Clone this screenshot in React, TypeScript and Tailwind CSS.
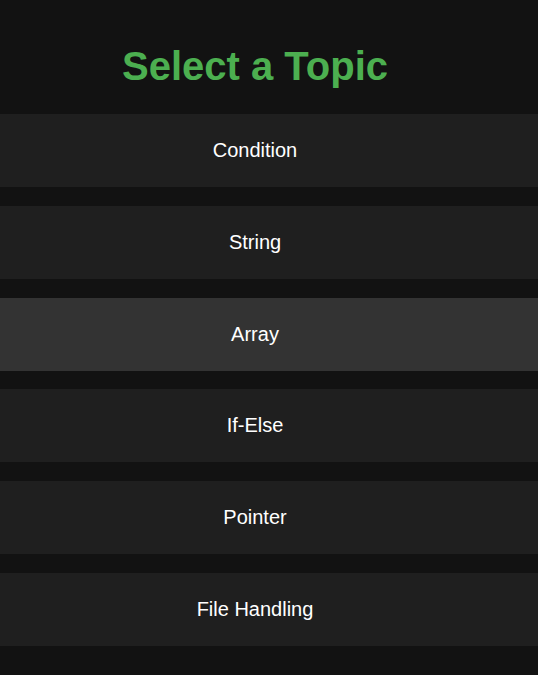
import React from "react";

const topics = ["Condition", "String", "Array", "If-Else", "Pointer", "File Handling"];

export default function App() {
  return (
    <div
      className="min-h-[675px] w-full bg-[#121212] overflow-hidden"
      style={{ fontFamily: '"Liberation Sans", Arial, sans-serif' }}
    >
      <h1 className="pt-[43px] mb-[25px] pr-[28px] text-center text-[40px] leading-[46px] font-bold text-[#4caf50]">
        Select a Topic
      </h1>
      <div className="flex flex-col gap-[18.8px]">
        {topics.map((t) => (
          <div
            key={t}
            className={
              "h-[73px] flex items-center justify-center pr-[28px] pb-[1px] text-[20px] text-white " +
              (t === "Array" ? "bg-[#333333]" : "bg-[#1f1f1f]")
            }
          >
            {t}
          </div>
        ))}
      </div>
    </div>
  );
}
